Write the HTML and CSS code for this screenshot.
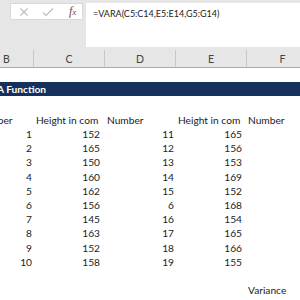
FILE: index.html
```html
<!DOCTYPE html>
<html>
<head>
<meta charset="utf-8">
<link rel="stylesheet" href="styles.css">
</head>
<body>
<div class="top">
  <div class="icons">
    <svg class="ic" width="10" height="10" viewBox="0 0 10 10"><path d="M1.5 1.5L8.5 8.5M8.5 1.5L1.5 8.5" stroke="#bdbdbd" stroke-width="1.2" fill="none"/></svg>
    <svg class="ic" width="12" height="10" viewBox="0 0 12 10"><path d="M1 5.5L4 8.5L11 1.5" stroke="#bdbdbd" stroke-width="1.2" fill="none"/></svg>
    <span class="fx">f<span class="x">x</span></span>
  </div>
  <div class="formula">=VARA(C5:C14,E5:E14,G5:G14)</div>
</div>
<div class="colhdr">
  <div class="ch">B</div><div class="ch">C</div><div class="ch">D</div><div class="ch">E</div><div class="ch last">F</div>
</div>
<div class="sheet">
  <div class="row"></div>
  <div class="row band"><span class="title">Excel VARA Function</span></div>
  <div class="row gap"></div>
  <div class="row">
    <div class="c cb l"><span class="cut">Number</span></div>
    <div class="c cc l">Height in com</div>
    <div class="c cd l">Number</div>
    <div class="c ce l">Height in com</div>
    <div class="c cf l">Number</div>
  </div>
  <div class="row"><div class="c cb">1</div><div class="c cc">152</div><div class="c cd">11</div><div class="c ce">165</div><div class="c cf"></div></div>
  <div class="row"><div class="c cb">2</div><div class="c cc">165</div><div class="c cd">12</div><div class="c ce">156</div><div class="c cf"></div></div>
  <div class="row"><div class="c cb">3</div><div class="c cc">150</div><div class="c cd">13</div><div class="c ce">153</div><div class="c cf"></div></div>
  <div class="row"><div class="c cb">4</div><div class="c cc">160</div><div class="c cd">14</div><div class="c ce">169</div><div class="c cf"></div></div>
  <div class="row"><div class="c cb">5</div><div class="c cc">162</div><div class="c cd">15</div><div class="c ce">152</div><div class="c cf"></div></div>
  <div class="row"><div class="c cb">6</div><div class="c cc">156</div><div class="c cd">6</div><div class="c ce">168</div><div class="c cf"></div></div>
  <div class="row"><div class="c cb">7</div><div class="c cc">145</div><div class="c cd">16</div><div class="c ce">154</div><div class="c cf"></div></div>
  <div class="row"><div class="c cb">8</div><div class="c cc">163</div><div class="c cd">17</div><div class="c ce">165</div><div class="c cf"></div></div>
  <div class="row"><div class="c cb">9</div><div class="c cc">152</div><div class="c cd">18</div><div class="c ce">166</div><div class="c cf"></div></div>
  <div class="row"><div class="c cb">10</div><div class="c cc">158</div><div class="c cd">19</div><div class="c ce">155</div><div class="c cf"></div></div>
  <div class="row"></div>
  <div class="row"><div class="c cb"></div><div class="c cc"></div><div class="c cd"></div><div class="c ce"></div><div class="c cf l">Variance</div></div>
</div>
</body>
</html>
```
FILE: styles.css
```css
html, body {
  margin: 0;
  padding: 0;
  width: 300px;
  height: 300px;
  overflow: hidden;
  background: #fff;
  font-family: Lato, "Liberation Sans", sans-serif;
  color: #222;
}
.top {
  display: flex;
  background: #e6e6e6;
  height: 50px;
  padding-top: 3px;
  box-sizing: border-box;
}
.icons {
  margin-left: 10px;
  width: 73px;
  height: 17px;
  background: #fff;
  box-sizing: border-box;
  border: 1px solid #d9d9d9;
  display: flex;
  align-items: center;
  padding-left: 8px;
  gap: 13px;
}
.fx {
  font-family: "Liberation Serif", serif;
  font-style: italic;
  font-size: 12px;
  color: #555;
  margin-left: 2px;
}
.fx .x { font-size: 9px; }
.formula {
  margin-left: 3px;
  flex: 1;
  height: 44px;
  background: #fff;
  font-size: 9px;
  padding: 5px 0 0 7px;
  box-sizing: border-box;
  color: #222;
}
.colhdr {
  display: grid;
  grid-template-columns: 34px 71px 71px 71px 71px;
  height: 17px;
  background: #e6e6e6;
  border-bottom: 1px solid #ababab;
}
.ch {
  border-right: 1px solid #c8c8c8;
  font-size: 10.5px;
  color: #444;
  display: flex;
  align-items: center;
  justify-content: center;
}
.colhdr .ch:first-child { justify-content: flex-start; padding-left: 3px; }
.ch.last { border-right: none; }
.sheet { font-size: 10.2px; }
.row {
  display: grid;
  grid-template-columns: 34px 71px 71px 71px 71px;
  height: 14.2px;
  line-height: 14.2px;
}
.row.gap { height: 16.5px; }
.band {
  display: block;
  background: #15305a;
  color: #fff;
  font-weight: bold;
  white-space: nowrap;
  overflow: hidden;
}
.title { display: inline-block; margin-left: -49px; }
.c {
  text-align: right;
  white-space: nowrap;
  overflow: hidden;
}
.c.l { text-align: left; padding-left: 2px; }
.cb { padding-right: 2px; }
.cc { padding-right: 5px; }
.cd { padding-right: 2px; }
.ce { padding-right: 5px; }
.cf.l { padding-left: 1px; }
.cb.l { padding-left: 0; }
.cut { display: inline-block; margin-left: -24px; }
```
